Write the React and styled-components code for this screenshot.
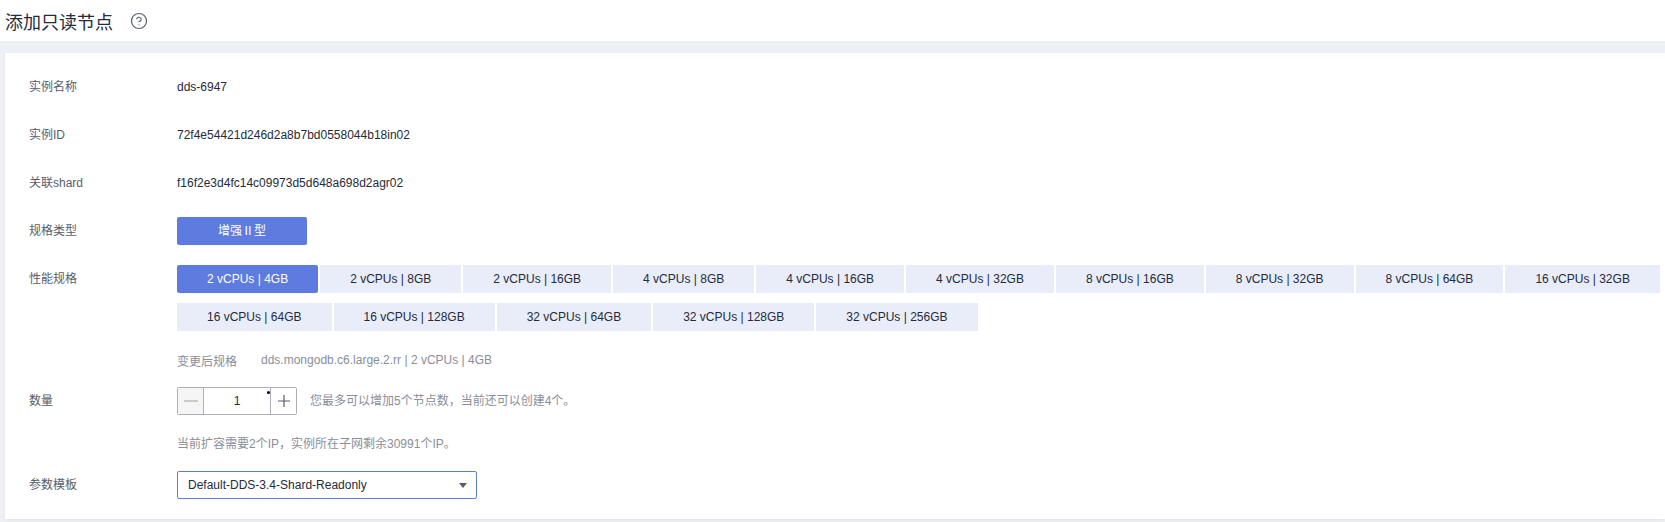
import styled, { createGlobalStyle } from "styled-components";
import { CircleHelp } from "lucide-react";

const GlobalStyle = createGlobalStyle`
    html, body {
        margin: 0;
        padding: 0;
        background: #eef0f5;
        font-family: "Liberation Sans", "Noto Sans CJK SC", sans-serif;
        font-size: 12px;
        color: #252b3a;
        overflow: hidden;
    }
`;

const specs = [
    "2 vCPUs | 4GB", "2 vCPUs | 8GB", "2 vCPUs | 16GB", "4 vCPUs | 8GB", "4 vCPUs | 16GB",
    "4 vCPUs | 32GB", "8 vCPUs | 16GB", "8 vCPUs | 32GB", "8 vCPUs | 64GB", "16 vCPUs | 32GB",
    "16 vCPUs | 64GB", "16 vCPUs | 128GB", "32 vCPUs | 64GB", "32 vCPUs | 128GB", "32 vCPUs | 256GB",
];

const App = () => {
    return (
        <Page>
            <GlobalStyle />
            <Header>
                <Title>添加只读节点</Title>
                <CircleHelp size={18} strokeWidth={1.6} color="#575d6c" />
            </Header>

            <Card>
                <Row>
                    <Label>实例名称</Label>
                    <Value>dds-6947</Value>
                </Row>
                <Row>
                    <Label>实例ID</Label>
                    <Value>72f4e54421d246d2a8b7bd0558044b18in02</Value>
                </Row>
                <Row>
                    <Label>关联shard</Label>
                    <Value>f16f2e3d4fc14c09973d5d648a698d2agr02</Value>
                </Row>

                <Row>
                    <Label>规格类型</Label>
                    <TypeButton>增强Ⅱ型</TypeButton>
                </Row>

                <Row>
                    <Label>性能规格</Label>
                    <SpecList>
                        {specs.map((spec, i) => (
                            <SpecButton key={spec} $active={i === 0}>{spec}</SpecButton>
                        ))}
                    </SpecList>
                </Row>

                <ChangedRow>
                    <Label />
                    <Note>变更后规格</Note>
                    <ChangedValue>dds.mongodb.c6.large.2.rr | 2 vCPUs | 4GB</ChangedValue>
                </ChangedRow>

                <Row>
                    <Label>数量</Label>
                    <Stepper>
                        <StepButton $disabled>
                            <svg width="16" height="16" viewBox="0 0 16 16">
                                <path d="M1 8h14" stroke="#adb0b8" strokeWidth="1.2" />
                            </svg>
                        </StepButton>
                        <StepInput>
                            1
                            <CursorMark />
                        </StepInput>
                        <StepButton>
                            <svg width="16" height="16" viewBox="0 0 16 16">
                                <path d="M2 8h12M8 2v12" stroke="#575d6c" strokeWidth="1.2" />
                            </svg>
                        </StepButton>
                    </Stepper>
                    <Help>您最多可以增加5个节点数，当前还可以创建4个。</Help>
                </Row>

                <IpRow>
                    <Label />
                    <Note>当前扩容需要2个IP，实例所在子网剩余30991个IP。</Note>
                </IpRow>

                <Row>
                    <Label>参数模板</Label>
                    <Select>
                        Default-DDS-3.4-Shard-Readonly
                        <Arrow />
                    </Select>
                </Row>
            </Card>
        </Page>
    );
};

const Page = styled.div`
    height: 522px;
    overflow: hidden;
    background: #eef0f5;
`;

const Header = styled.div`
    height: 41px;
    background: #fff;
    display: flex;
    align-items: center;
    padding-left: 5px;
    gap: 17px;
`;

const Title = styled.h1`
    margin: 0;
    font-size: 18px;
    font-weight: normal;
    color: #252b3a;
`;

const Card = styled.div`
    margin: 12px 0 0 5px;
    height: 466px;
    box-sizing: border-box;
    padding: 20px 0 0 24px;
    background: #fff;
    box-shadow: 0 1px 3px rgba(0, 0, 0, 0.06);
`;

const Row = styled.div`
    display: flex;
    align-items: flex-start;
    margin-bottom: 20px;
`;

const ChangedRow = styled(Row)`
    margin: -1px 0 17px;
    height: 20px;
    align-items: center;
`;

const IpRow = styled(Row)`
    margin: -3px 0 19px;
    height: 20px;
    align-items: center;
`;

const Label = styled.div`
    width: 148px;
    flex: none;
    line-height: 28px;
    color: #575d6c;
`;

const Value = styled.div`
    line-height: 28px;
    color: #252b3a;
`;

const TypeButton = styled.div`
    width: 130px;
    height: 28px;
    line-height: 28px;
    text-align: center;
    border-radius: 2px;
    background: #5e7ce0;
    color: #fff;
`;

const SpecList = styled.div`
    display: flex;
    flex-wrap: wrap;
    gap: 10px 2px;
    width: 1486px;
`;

const SpecButton = styled.div`
    height: 28px;
    line-height: 28px;
    padding: 0 30px;
    white-space: nowrap;
    border-radius: ${(p) => (p.$active ? "2px" : "0")};
    background: ${(p) => (p.$active ? "#5e7ce0" : "#e9edfa")};
    color: ${(p) => (p.$active ? "#fff" : "#252b3a")};
`;

const Note = styled.div`
    color: #8a8e99;
`;

const ChangedValue = styled(Note)`
    margin-left: 24px;
`;

const Stepper = styled.div`
    width: 120px;
    height: 28px;
    box-sizing: border-box;
    display: flex;
    border: 1px solid #adb0b8;
    border-radius: 2px;
`;

const StepButton = styled.div`
    width: 25px;
    flex: none;
    display: flex;
    align-items: center;
    justify-content: center;
    background: ${(p) => (p.$disabled ? "#f5f5f6" : "#fff")};
`;

const StepInput = styled.div`
    position: relative;
    flex: 1;
    text-align: center;
    line-height: 26px;
    border-left: 1px solid #adb0b8;
    border-right: 1px solid #adb0b8;
    color: #252b3a;
`;

const CursorMark = styled.span`
    position: absolute;
    top: 3px;
    right: 0;
    width: 3px;
    height: 3px;
    background: #000;
    border-radius: 50%;
`;

const Help = styled.div`
    margin-left: 13px;
    line-height: 28px;
    color: #8a8e99;
`;

const Select = styled.div`
    position: relative;
    width: 300px;
    height: 28px;
    box-sizing: border-box;
    padding-left: 10px;
    line-height: 26px;
    border: 1px solid #5e7ce0;
    border-radius: 2px;
    color: #252b3a;
`;

const Arrow = styled.span`
    position: absolute;
    top: 11px;
    right: 9px;
    border-style: solid;
    border-width: 5px 4.5px 0;
    border-color: #575d6c transparent transparent;
`;

export default App;
